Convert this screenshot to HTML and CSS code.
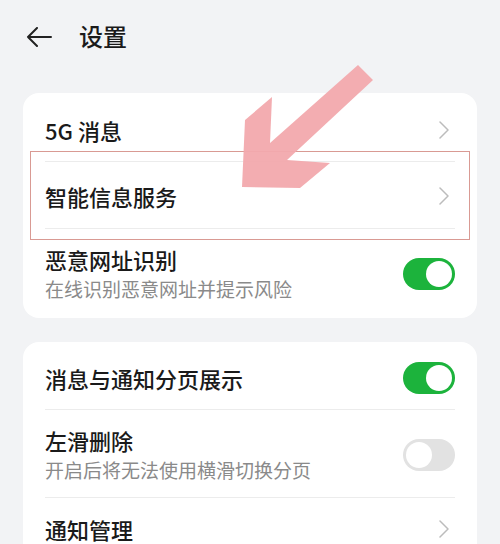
FILE: index.html
```html
<!DOCTYPE html>
<html lang="zh-CN">
<head>
<meta charset="utf-8">
<link rel="stylesheet" href="styles.css">
</head>
<body>
<div class="page">
  <header class="header">
    <svg class="back" width="26" height="20" viewBox="0 0 26 20"><path d="M25 10H2M11 1L2 10l9 9" fill="none" stroke="#222" stroke-width="2" stroke-linecap="round" stroke-linejoin="round"/></svg>
    <h1 class="title">设置</h1>
  </header>

  <section class="card card-first">
    <div class="row r1">
      <span class="label">5G 消息</span>
      <svg class="chev" width="10" height="18" viewBox="0 0 10 18"><path d="M1 1l8 8-8 8" fill="none" stroke="#bcbcbc" stroke-width="1.5" stroke-linecap="round" stroke-linejoin="round"/></svg>
    </div>
    <div class="row r2">
      <span class="label">智能信息服务</span>
      <svg class="chev" width="10" height="18" viewBox="0 0 10 18"><path d="M1 1l8 8-8 8" fill="none" stroke="#bcbcbc" stroke-width="1.5" stroke-linecap="round" stroke-linejoin="round"/></svg>
    </div>
    <div class="row r3 last">
      <div class="texts">
        <span class="label">恶意网址识别</span>
        <span class="sub">在线识别恶意网址并提示风险</span>
      </div>
      <span class="toggle on"><span class="knob"></span></span>
    </div>
    <div class="highlight"></div>
  </section>

  <section class="card">
    <div class="row c1">
      <span class="label">消息与通知分页展示</span>
      <span class="toggle on"><span class="knob"></span></span>
    </div>
    <div class="row c2">
      <div class="texts">
        <span class="label">左滑删除</span>
        <span class="sub">开启后将无法使用横滑切换分页</span>
      </div>
      <span class="toggle off"><span class="knob"></span></span>
    </div>
    <div class="row c3 last">
      <span class="label">通知管理</span>
      <svg class="chev" width="10" height="18" viewBox="0 0 10 18"><path d="M1 1l8 8-8 8" fill="none" stroke="#bcbcbc" stroke-width="1.5" stroke-linecap="round" stroke-linejoin="round"/></svg>
    </div>
  </section>

  <svg class="arrow" width="500" height="544" viewBox="0 0 500 544">
    <polygon points="358,65 373,80 287,160 330,163 300,188 242,187 245,120 272,97 270,143" fill="#f2a9ad" fill-opacity="0.95"/>
  </svg>
</div>
</body>
</html>
```

FILE: styles.css
```css
* { box-sizing: border-box; }
html, body {
  margin: 0;
  padding: 0;
  background: #f2f3f5;
}
body {
  font-family: "Noto Sans CJK SC", "Noto Sans", sans-serif;
  color: #1a1a1a;
  width: 500px;
  height: 544px;
  overflow: hidden;
}
.page {
  position: relative;
  width: 500px;
  height: 544px;
}
.header {
  height: 74px;
  display: flex;
  align-items: center;
  padding-left: 26px;
  margin-bottom: 19px;
}
.back { display: block; }
.title {
  margin: 0 0 0 27px;
  font-size: 24px;
  font-weight: 500;
  line-height: 1;
  color: #1a1a1a;
  padding-bottom: 2px;
}
.card {
  position: relative;
  margin: 0 23px 24px 23px;
  background: #ffffff;
  border-radius: 16px;
  padding: 0 22px;
}
.row {
  display: flex;
  align-items: center;
  justify-content: space-between;
  border-bottom: 1px solid #ececec;
}
.row.last { border-bottom: none; }
.r1 { height: 69px; padding-top: 5px; }
.r2 { height: 67px; padding-top: 2px; }
.r3 { height: 89px; padding-top: 0; }
.c1 { height: 68px; padding-top: 4px; }
.c2 { height: 88px; padding-top: 2px; }
.c3 { height: 62px; padding-top: 0; }
.label {
  font-size: 22px;
  font-weight: 500;
  line-height: 30px;
  color: #1a1a1a;
}
.texts {
  display: flex;
  flex-direction: column;
}
.sub {
  font-size: 19px;
  line-height: 28px;
  color: #8a8a8a;
  margin-top: 1px;
}
.chev {
  display: block;
  margin-right: 6px;
}
.toggle {
  position: relative;
  width: 52px;
  height: 32px;
  border-radius: 16px;
  flex: none;
}
.toggle.on { background: #1cb33c; }
.toggle.off { background: #e2e2e2; }
.knob {
  position: absolute;
  top: 3px;
  width: 26px;
  height: 26px;
  border-radius: 50%;
  background: #ffffff;
}
.toggle.on .knob { right: 3px; }
.toggle.off .knob { left: 3px; }
.highlight {
  position: absolute;
  left: 7px;
  top: 58px;
  width: 440px;
  height: 89px;
  border: 1.5px solid #d99a93;
  pointer-events: none;
}
.arrow {
  position: absolute;
  left: 0;
  top: 0;
  pointer-events: none;
}
```
